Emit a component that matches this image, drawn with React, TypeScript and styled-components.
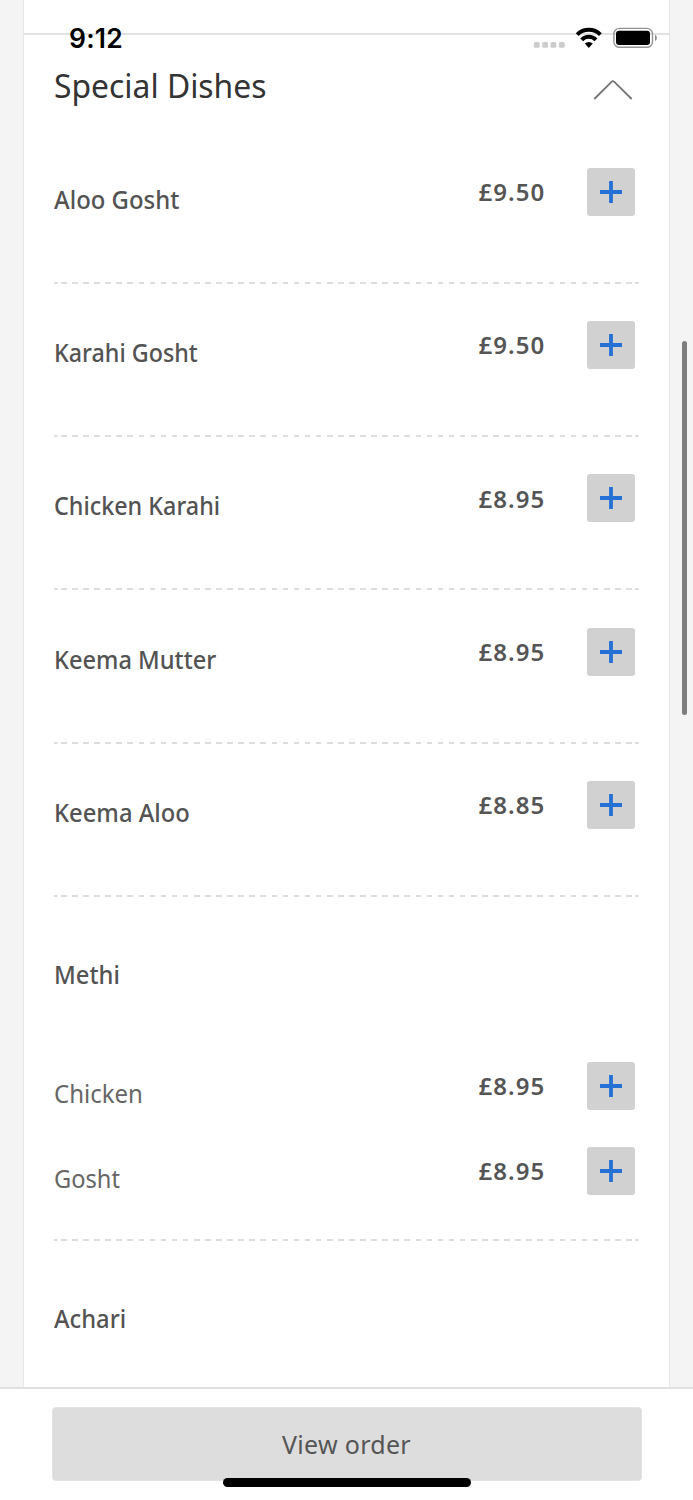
import React from 'react';
import styled, { createGlobalStyle } from 'styled-components';

const GlobalStyle = createGlobalStyle`
  * { box-sizing: border-box; }
  body { margin: 0; background: #f4f4f4; font-family: "Noto Sans", "Open Sans", sans-serif; }
`;

const Screen = styled.div`
  position: relative;
  display: flex;
  flex-direction: column;
  width: 693px;
  height: 1500px;
  overflow: hidden;
`;

const Card = styled.main`
  flex: 1;
  min-height: 0;
  overflow: hidden;
  margin: 0 23.5px 0 23px;
  border: solid #e6e6e6;
  border-width: 0 1.5px;
  background: #fff;
`;

const PreviousSection = styled.div`
  height: 35px;
  border-bottom: 2px solid #e2e2e2;
`;

const Section = styled.section`
  padding: 0 29.5px 0 30px;
`;

const SectionHeader = styled.header`
  display: flex;
  justify-content: space-between;
  align-items: flex-start;
  height: 95.4px;
`;

const Label = styled.span<{ $spacing?: number; $narrow?: number }>`
  display: inline-block;
  white-space: nowrap;
  letter-spacing: ${p => p.$spacing ?? 0}px;
  transform: ${p => (p.$narrow ? `scaleX(${p.$narrow})` : 'none')};
  transform-origin: left;
`;

const Title = styled.h2`
  margin: 26px 0 0;
  font-size: 33px;
  font-weight: 400;
  line-height: 50px;
  color: #333;
`;

const Chevron = styled.svg`
  margin: 44px 6px 0 0;
`;

const Dish = styled.div`
  display: flex;
  flex-direction: column;
  height: 153.3px;
  padding-top: 37.3px;
`;

const OptionDish = styled.div`
  display: flex;
  flex-direction: column;
  height: 343.9px;
  padding-top: 46px;
`;

const Line = styled.div<{ $height?: number }>`
  display: flex;
  align-items: flex-start;
  height: ${p => p.$height ?? 85}px;
`;

const Name = styled.div<{ $light?: boolean }>`
  flex: 1;
  margin-top: 13.2px;
  font-size: 25px;
  font-weight: ${p => (p.$light ? 430 : 480)};
  line-height: 36px;
  color: ${p => (p.$light ? '#666' : '#535353')};
`;

const Price = styled.div`
  width: 108.6px;
  margin-top: 6.4px;
  font-size: 24px;
  font-weight: 600;
  line-height: 36px;
  color: #555;
`;

const AddButton = styled.button`
  display: grid;
  place-items: center;
  width: 48px;
  height: 48px;
  margin-right: 4px;
  padding: 0;
  border: 0;
  border-radius: 3px;
  background: #d1d1d1;
`;

const Divider = styled.div`
  height: 2px;
  margin-top: auto;
  background:
    linear-gradient(#ddd, #ddd) 0 0 / 3.6px 2px no-repeat,
    linear-gradient(#ddd, #ddd) 100% 0 / 3.6px 2px no-repeat,
    repeating-linear-gradient(90deg, #ddd 0 5.6px, transparent 5.6px 11.08px) 7px 0 / 571px 2px no-repeat;
`;

const Footer = styled.footer`
  height: 113px;
  padding: 18px 51.5px 0;
  border-top: 2px solid #e0e0e0;
  background: #fff;
`;

const OrderButton = styled.button`
  display: flex;
  justify-content: center;
  align-items: center;
  width: 100%;
  height: 74px;
  padding: 0;
  border: 1px solid #e3e3e3;
  border-radius: 4px;
  background: #ddd;
  color: #555;
  font: 400 25px/36px "Noto Sans", sans-serif;
`;

const StatusBar = styled.div`
  position: absolute;
  top: 0;
  left: 0;
  right: 0;
  display: flex;
  justify-content: space-between;
  padding: 22px 35px 0 69px;
`;

const Time = styled.div`
  font: 600 26.5px/33px Inter, sans-serif;
  letter-spacing: 0.2px;
  color: #000;
`;

const HomeIndicator = styled.div`
  position: absolute;
  left: 222.5px;
  bottom: 13.5px;
  width: 248px;
  height: 8.5px;
  border-radius: 5px;
  background: #000;
`;

const ScrollThumb = styled.div`
  position: absolute;
  top: 341px;
  right: 6px;
  width: 5.5px;
  height: 374px;
  border-radius: 3px;
  background: #7d7d7d;
`;

const Add = () => (
  <AddButton aria-label="Add">
    <svg width="22" height="22" viewBox="0 0 22 22">
      <path d="M11 0v22M0 11h22" stroke="#2570d4" strokeWidth="3.8" />
    </svg>
  </AddButton>
);

const StatusIcons = () => (
  <svg width="125" height="32" viewBox="533 22 125 32" fill="none">
    <g fill="#ccc">
      {[533.8, 542.2, 550.5, 558.9].map(x => (
        <rect key={x} x={x} y="42" width="5.8" height="5.8" rx="1.6" />
      ))}
    </g>
    <g stroke="#000" strokeWidth="4">
      <path d="M577.2 34.6a16.4 16.4 0 0 1 23.2 0" />
      <path d="M581.7 39.8a10 10 0 0 1 14.2 0" />
    </g>
    <path d="M584.8 43.6a5.8 5.8 0 0 1 8 0l-4 4.3z" fill="#000" />
    <rect x="613.9" y="28.4" width="38.6" height="18.9" rx="5.6" stroke="#949494" strokeWidth="1.4" />
    <rect x="616" y="30.8" width="34" height="14.2" rx="3" fill="#000" />
    <path d="M655 34.8q1.9 1 1.9 3.1t-1.9 3.2z" fill="#888" />
  </svg>
);

const dishes = [
  { name: 'Aloo Gosht', price: '£9.50', narrow: 0.957 },
  { name: 'Karahi Gosht', price: '£9.50', narrow: 0.932 },
  { name: 'Chicken Karahi', price: '£8.95', narrow: 0.933 },
  { name: 'Keema Mutter', price: '£8.95', narrow: 0.945 },
  { name: 'Keema Aloo', price: '£8.85', narrow: 0.952 },
];

const options = [
  { name: 'Chicken', price: '£8.95', narrow: 0.96 },
  { name: 'Gosht', price: '£8.95', narrow: 0.945 },
];

export default function App() {
  return (
    <Screen>
      <GlobalStyle />
      <Card>
        <PreviousSection />
        <Section>
          <SectionHeader>
            <Title><Label $narrow={0.965}>Special Dishes</Label></Title>
            <Chevron width="40" height="22" viewBox="0 0 40 22" fill="none">
              <path d="M1.3 20L18.5 2.8q1.4-1.4 2.8 0L38.7 20" stroke="#757575" strokeWidth="1.8" />
            </Chevron>
          </SectionHeader>
          {dishes.map(d => (
            <Dish key={d.name}>
              <Line>
                <Name><Label $narrow={d.narrow}>{d.name}</Label></Name>
                <Price><Label $spacing={1.1}>{d.price}</Label></Price>
                <Add />
              </Line>
              <Divider />
            </Dish>
          ))}
          <OptionDish>
            <Line $height={118.9}>
              <Name><Label $narrow={0.95}>Methi</Label></Name>
            </Line>
            {options.map(o => (
              <Line key={o.name}>
                <Name $light><Label $narrow={o.narrow}>{o.name}</Label></Name>
                <Price><Label $spacing={1.1}>{o.price}</Label></Price>
                <Add />
              </Line>
            ))}
            <Divider />
          </OptionDish>
          <OptionDish>
            <Line>
              <Name><Label $narrow={0.95}>Achari</Label></Name>
            </Line>
          </OptionDish>
        </Section>
      </Card>
      <Footer>
        <OrderButton><Label $spacing={0.3}>View order</Label></OrderButton>
      </Footer>
      <StatusBar>
        <Time>9:12</Time>
        <StatusIcons />
      </StatusBar>
      <HomeIndicator />
      <ScrollThumb />
    </Screen>
  );
}
